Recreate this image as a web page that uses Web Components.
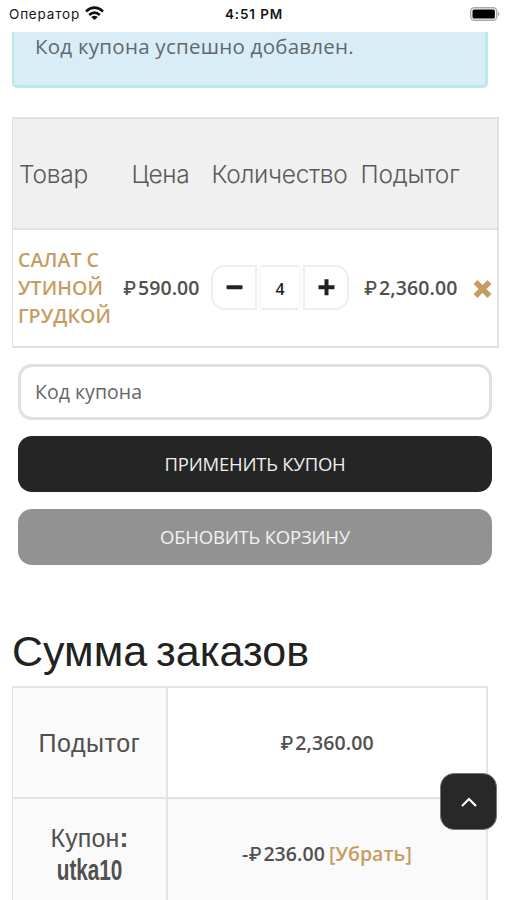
<!DOCTYPE html>
<html lang="ru">
<head>
<meta charset="utf-8">
<title>Корзина</title>
<style>
html,body{margin:0;background:#fff;height:900px;overflow:hidden}
body{font-family:"Open Sans","Noto Sans",sans-serif;color:#4b4b4b}
</style>
</head>
<body>
<shop-screen></shop-screen>
<script>
const define=(name,html,setup)=>customElements.define(name,class extends HTMLElement{
  connectedCallback(){
    if(this.shadowRoot)return;
    this.attachShadow({mode:'open'}).innerHTML=html;
    if(setup)setup(this);
  }
});

/* One line of text, tracked to the width given in "w". */
define('text-run','<style>:host{display:inline-block;white-space:nowrap}span{display:inline-block}</style><span><slot></slot></span>',el=>{
  const w=+el.getAttribute('w'),s=el.shadowRoot.querySelector('span');
  if(!w)return;
  const n=el.textContent.length,nat=s.getBoundingClientRect().width,ls=(w-nat)/n;
  s.style.letterSpacing=ls+'px';
});

/* Rouble amount */
define('price-amount',`<style>:host{display:inline-flex;align-items:baseline;font:600 19.5px/28px "Open Sans",sans-serif;color:#505050;white-space:nowrap}
i{font:500 18.500px/28px Inter,sans-serif;width:15px}</style><slot name="sign"></slot><i>₽</i><slot></slot>`);

define('status-bar',`<style>
:host{display:grid;grid-template-columns:1fr auto 1fr;align-items:center;box-sizing:border-box;height:32px;padding:0 6px 4px 9px;background:#fff;color:#161616;font:500 13.500px/18px Inter,sans-serif}
.l{display:flex;align-items:center;gap:5px;font-weight:400}.r{justify-self:end;margin-top:-1px}svg{display:block}.l svg{margin-top:-2px}
.t{font-weight:600;margin-left:-2px}</style>
<div class="l"><text-run w="71">Оператор</text-run><svg width="19" height="15" viewBox="0 0 19 15"><g fill="none" stroke="#111" stroke-width="2.700"><path d="M1 5.400Q9.500-2 18 5.400"/><path d="M4.200 8.900Q9.500 4.200 14.800 8.900"/></g><path fill="#111" d="M6.200 11Q9.500 8.300 12.800 11L9.500 14z"/></svg></div>
<text-run class="t" w="58">4:51 PM</text-run>
<svg class="r" width="31" height="14" viewBox="0 0 31 14"><rect x=".7" y=".7" width="26" height="12.600" rx="3.500" fill="#fff" stroke="#aaa" stroke-width="1.400"/><rect x="2.500" y="2.500" width="22.400" height="9" rx="1.500" fill="#000"/><path d="M28 4.500Q31 7 28 9.500z" fill="#aaa"/></svg>`);

define('notice-box',`<style>:host{display:block;box-sizing:border-box;height:56px;margin:0 19px 0 12px;padding:0 21px;background:#d9edf7;border:solid #bce8eb;border-width:0 3px 3px 2px;border-radius:0 0 5px 5px;font:400 20.500px/29px "Open Sans",sans-serif;color:#5e696e}</style><slot></slot>`);

define('quantity-stepper',`<style>:host{display:flex;gap:2px;height:45px;width:138px}
div{box-sizing:border-box;border:2px solid #eee;display:flex;align-items:center;justify-content:center;height:45px;background:#fff}
.m{width:46px;border-radius:14px 0 0 14px}.n{width:42px;border-radius:5px;border-left-color:#f8f8f8;border-right-color:#f8f8f8;font:600 16px/20px "Open Sans",sans-serif;color:#222;padding-top:3px}.p{width:46px;border-radius:0 14px 14px 0}</style>
<div class="m"><svg width="17" height="17"><rect x=".5" y="6.300" width="16" height="4" rx="1" fill="#222"/></svg></div><div class="n"><slot></slot></div>
<div class="p"><svg width="17" height="17"><path d="M.5 8.300H16.500M8.500.3V16.300" stroke="#222" stroke-width="4"/></svg></div>`);

define('cart-table',`<style>
:host{display:block;box-sizing:border-box;margin:29px 8px 0 12px;border:2px solid #e2e2e2;border-left-width:1px;height:231px}
.row{display:grid;grid-template-columns:103px 93px 149px 100px 1fr;align-items:center}
.head{box-sizing:border-box;height:111px;background:#f0f0f0;border-bottom:2px solid #e2e2e2;font:300 24.500px/30px Inter,"Liberation Sans",sans-serif;color:#5a5a5a;grid-template-columns:112.500px 80px 149px 1fr;padding:1px 0 0 6px}
.body{height:116px}
.name{font:600 19.500px/28px "Open Sans",sans-serif;color:#c59d5f;padding:0 0 0 5px}
.price{padding-left:7px;white-space:nowrap}.price,.total{margin-top:-1px}.q{padding-left:2px;margin-top:-1px}
.total{padding-left:6px}.x{padding:2px 0 0 15px}svg{display:block}
</style>
<div class="row head"><text-run w="69">Товар</text-run><text-run w="58">Цена</text-run><text-run w="136">Количество</text-run><text-run w="99">Подытог</text-run></div>
<div class="row body"><div class="name"><text-run w="81">САЛАТ С</text-run><br><text-run w="85">УТИНОЙ</text-run><br><text-run w="93">ГРУДКОЙ</text-run></div>
<div class="price"><price-amount><text-run w="61.500">590.00</text-run></price-amount></div>
<div class="q"><quantity-stepper>4</quantity-stepper></div>
<div class="total"><price-amount><text-run w="78.500">2,360.00</text-run></price-amount></div>
<div class="x"><svg width="19" height="18" viewBox="0 0 19 18"><path d="M2.500 2L16.500 16M16.500 2L2.500 16" stroke="#c59d5f" stroke-width="5.400"/></svg></div></div>`);

define('coupon-field',`<style>:host{display:flex;align-items:center;box-sizing:border-box;margin:16px 15px 0 18px;height:56px;border:3px solid #e0e0e0;border-radius:14px;padding:0 0 0 14px;font:400 19.500px/28px "Open Sans",sans-serif;color:#666;background:#fff}</style><slot></slot>`);

define('wide-button',`<style>:host{display:flex;align-items:center;justify-content:center;box-sizing:border-box;margin:16px 15px 0 18px;height:56px;border-radius:14px;background:#252525;font:400 18.500px/28px "Open Sans",sans-serif;color:#eee}
:host([muted]){margin-top:17px;background:#929292;color:#f2f2f2}</style><slot></slot>`);

define('totals-table',`<style>
:host{display:block;box-sizing:border-box;margin:0 19px 0 12px;border:2px solid #e5e5e5;border-left-width:1px}
.row{display:grid;grid-template-columns:155px 1fr}
.row+.row{border-top:2px solid #e3e3e3;background:#fafafa}
.row>div{height:109px;display:flex;flex-direction:column;align-items:center;justify-content:center}
.h{border-right:2px solid #e3e3e3;background:#fafafa;font:400 25px/32px "Liberation Sans",sans-serif;color:#505050}
.row:last-child>div{height:110px}
.row>.v{flex-direction:row;font:600 19.500px/28px "Open Sans",sans-serif}
.h b{font:700 30px/32px "Liberation Sans Narrow","Liberation Sans",sans-serif;transform:scaleX(.69);white-space:nowrap}
.h em{font:700 27px/32px "Liberation Sans",sans-serif}
.link{color:#c59d5f;margin-left:4px}
</style>
<div class="row"><div class="h"><text-run w="102">Подытог</text-run></div><div class="v"><price-amount><text-run w="78.500">2,360.00</text-run></price-amount></div></div>
<div class="row"><div class="h"><span><text-run w="69">Купон</text-run><em>:</em></span><b>utka10</b></div><div class="v"><price-amount><span slot="sign">-</span><text-run w="61.500">236.00</text-run></price-amount><text-run class="link" w="83">[Убрать]</text-run></div></div>`);

define('scroll-top',`<style>:host{position:absolute;left:440px;top:773px;width:57px;height:57px;box-sizing:border-box;border:1px solid #777;border-radius:14px;background:#282828;display:flex;align-items:center;justify-content:center}</style>
<svg width="18" height="14"><path d="M2 11L9 4L16 11" fill="none" stroke="#fff" stroke-width="2.200"/></svg>`);

define('shop-screen',`<style>:host{display:block;position:relative;width:507px;height:900px;overflow:hidden;background:#fff}
h1{margin:62px 12px 0;height:59px;font:400 43px/48px "Liberation Sans",sans-serif;color:#222;word-spacing:-3px}</style>
<status-bar></status-bar>
<notice-box><text-run w="319">Код купона успешно добавлен.</text-run></notice-box>
<cart-table></cart-table>
<coupon-field><text-run w="107">Код купона</text-run></coupon-field>
<wide-button><text-run w="181">ПРИМЕНИТЬ КУПОН</text-run></wide-button>
<wide-button muted><text-run w="190">ОБНОВИТЬ КОРЗИНУ</text-run></wide-button>
<h1><text-run w="297">Сумма заказов</text-run></h1>
<totals-table></totals-table>
<scroll-top></scroll-top>`);
</script>
</body>
</html>
